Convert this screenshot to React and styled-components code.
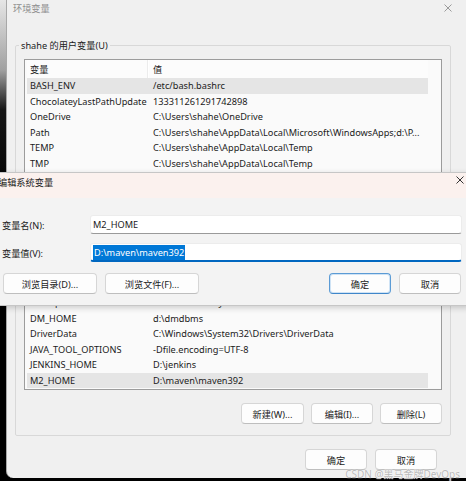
import React from 'react';
import styled, { createGlobalStyle } from 'styled-components';

const GlobalStyle = createGlobalStyle`
  html, body { margin: 0; padding: 0; }
  body {
    width: 466px;
    height: 481px;
    overflow: hidden;
    background: linear-gradient(to bottom, #e6e6e6 0px, #a0a0a0 70px, #151515 110px, #000 200px);
    font-family: "Noto Sans", "Noto Sans CJK SC", sans-serif;
    font-size: 9.2px;
    color: #1b1b1b;
  }
`;

const Window = styled.div`
  position: relative;
  margin-left: 6px;
  width: 460px;
  height: 478px;
  box-sizing: border-box;
  background: #f0f0f0;
  border-left: 1px solid #a8a8a8;
  border-bottom-left-radius: 7px;
  display: flex;
  flex-direction: column;
`;

const TitleBar = styled.div`
  height: 16px;
  flex: none;
  display: flex;
  align-items: center;
  justify-content: space-between;
  padding: 0 14px 0 6px;
  color: #8e8e8e;
`;

const EditTitleBar = styled.div`
  height: 25px;
  flex: none;
  box-sizing: border-box;
  display: flex;
  align-items: flex-start;
  justify-content: space-between;
  padding: 3px 5px 0 1px;
  line-height: 13px;
  background: #fbf1ee;
  color: #1b1b1b;
`;

const Group = styled.fieldset`
  margin: ${p => p.$top}px 15px 0 8px;
  padding: 7px 8px 11px;
  border: 1px solid #d8d8d8;
  border-radius: 2px;
  min-width: 0;
  min-height: 0;
  display: flex;
  flex-direction: column;
  flex: ${p => (p.$grow ? 1 : 'none')};
`;

const Legend = styled.legend`
  padding: 0 2px;
  margin-left: -5px;
  line-height: 13px;
`;

const List = styled.div`
  border: 1px solid #9c9c9c;
  background: #fafafa;
  padding: 0 13px 1px 2px;
  height: ${p => (p.$h ? `${p.$h}px` : 'auto')};
  flex: ${p => (p.$grow ? 1 : 'none')};
  min-height: 0;
  display: flex;
  flex-direction: column;
  justify-content: ${p => (p.$bottom ? 'flex-end' : 'flex-start')};
  overflow: hidden;
`;

const HeaderRow = styled.div`
  flex: none;
  height: 18px;
  display: grid;
  grid-template-columns: 122px 1fr;
  align-items: stretch;
  background: #fcfcfc;
`;

const HeaderCell = styled.div`
  display: flex;
  align-items: center;
  padding-left: ${p => (p.$first ? 3 : 4)}px;
  border-right: ${p => (p.$first ? '1px solid #ffffff' : 'none')};
  box-shadow: ${p => (p.$first ? 'inset -1px 0 0 #ececec' : 'none')};
`;

const Row = styled.div`
  flex: none;
  height: 15.5px;
  display: grid;
  grid-template-columns: 122px 1fr;
  align-items: center;
  background: ${p => (p.$selected ? '#e5e5e5' : 'transparent')};
  white-space: nowrap;
`;

const Cell = styled.span`
  padding-left: ${p => (p.$first ? 3 : 4)}px;
  overflow: hidden;
`;

const ButtonRow = styled.div`
  display: flex;
  flex: none;
  gap: 7px;
  justify-content: flex-end;
  margin-top: 13px;
`;

const BottomBar = styled.div`
  flex: none;
  display: flex;
  justify-content: flex-end;
  gap: 8px;
  margin: 13px 29px 8px 0;
`;

const Button = styled.button`
  width: ${p => p.$w}px;
  height: 21px;
  box-sizing: border-box;
  padding: 0;
  display: flex;
  align-items: center;
  justify-content: center;
  font: inherit;
  color: #1b1b1b;
  background: #fdfdfd;
  border: 1px solid ${p => (p.$primary ? '#5b9bd5' : '#d6d6d6')};
  border-bottom-color: ${p => (p.$primary ? '#3f86c9' : '#bebebe')};
  box-shadow: ${p => (p.$primary ? 'inset 0 0 0 1px #cfe3f5' : 'none')};
  border-radius: 4px;
`;

const EditWindow = styled.div`
  position: absolute;
  top: 172px;
  left: -11px;
  width: 474px;
  height: 134px;
  box-sizing: border-box;
  background: #f3f3f3;
  border: 1px solid #c6c6c6;
  box-shadow: 0 2px 6px rgba(0, 0, 0, 0.18);
  display: flex;
  flex-direction: column;
`;

const Form = styled.div`
  display: grid;
  grid-template-columns: 88px 1fr;
  grid-auto-rows: 19px;
  row-gap: 9px;
  align-items: center;
  padding: 17px 7px 0 5px;
`;

const Field = styled.div`
  height: 19px;
  box-sizing: border-box;
  display: flex;
  align-items: center;
  padding-left: 2px;
  background: #ffffff;
  border: 1px solid #ececec;
  border-bottom: ${p => (p.$focused ? '2px solid #0067c0' : '1px solid #9a9a9a')};
  border-radius: 3px;
  white-space: nowrap;
`;

const Selected = styled.span`
  background: #0078d7;
  color: #ffffff;
  padding: 1px 1px;
`;

const EditButtons = styled.div`
  display: flex;
  gap: 8px;
  margin-top: 11px;
  padding: 0 8px 0 6px;
`;

const Spacer = styled.div`
  flex: 1;
`;

const Watermark = styled.div`
  position: absolute;
  right: 6px;
  bottom: -3px;
  font-size: 10px;
  color: #b9b9b9;
  text-shadow: 0 0 1px #ffffff, 0 0 1px #ffffff;
  white-space: nowrap;
`;

function CloseIcon({ color }) {
  return (
    <svg width="8" height="8" viewBox="0 0 8 8" style={{ display: 'block' }}>
      <path d="M0.5 0.5 L7.5 7.5 M7.5 0.5 L0.5 7.5" stroke={color} strokeWidth="1" fill="none" />
    </svg>
  );
}

const userVars = [
  ['BASH_ENV', '/etc/bash.bashrc'],
  ['ChocolateyLastPathUpdate', '133311261291742898'],
  ['OneDrive', 'C:\\Users\\shahe\\OneDrive'],
  ['Path', 'C:\\Users\\shahe\\AppData\\Local\\Microsoft\\WindowsApps;d:\\P...'],
  ['TEMP', 'C:\\Users\\shahe\\AppData\\Local\\Temp'],
  ['TMP', 'C:\\Users\\shahe\\AppData\\Local\\Temp'],
];

const systemVars = [
  ['ComSpec', 'C:\\WINDOWS\\system32\\cmd.exe'],
  ['DM_HOME', 'd:\\dmdbms'],
  ['DriverData', 'C:\\Windows\\System32\\Drivers\\DriverData'],
  ['JAVA_TOOL_OPTIONS', '-Dfile.encoding=UTF-8'],
  ['JENKINS_HOME', 'D:\\jenkins'],
  ['M2_HOME', 'D:\\maven\\maven392'],
];

export default function App() {
  return (
    <>
      <GlobalStyle />
      <Window>
        <TitleBar>
          <span>环境变量</span>
          <CloseIcon color="#9a9a9a" />
        </TitleBar>

        <Group $top={23}>
          <Legend>shahe 的用户变量(U)</Legend>
          <List $h={150}>
            <HeaderRow>
              <HeaderCell $first>变量</HeaderCell>
              <HeaderCell>值</HeaderCell>
            </HeaderRow>
            {userVars.map(([name, value], i) => (
              <Row key={name} $selected={i === 0}>
                <Cell $first>{name}</Cell>
                <Cell>{value}</Cell>
              </Row>
            ))}
          </List>
          <ButtonRow>
            <Button $w={63}>新建(N)...</Button>
            <Button $w={62}>编辑(E)...</Button>
            <Button $w={62}>删除(D)</Button>
          </ButtonRow>
        </Group>

        <Group $top={6} $grow>
          <Legend>系统变量(S)</Legend>
          <List $grow $bottom>
            {systemVars.map(([name, value]) => (
              <Row key={name} $selected={name === 'M2_HOME'}>
                <Cell $first>{name}</Cell>
                <Cell>{value}</Cell>
              </Row>
            ))}
          </List>
          <ButtonRow>
            <Button $w={63}>新建(W)...</Button>
            <Button $w={62}>编辑(I)...</Button>
            <Button $w={62}>删除(L)</Button>
          </ButtonRow>
        </Group>

        <BottomBar>
          <Button $w={62}>确定</Button>
          <Button $w={62}>取消</Button>
        </BottomBar>

        <EditWindow>
          <EditTitleBar>
            <span>编辑系统变量</span>
            <CloseIcon color="#333333" />
          </EditTitleBar>
          <Form>
            <span>变量名(N):</span>
            <Field>M2_HOME</Field>
            <span>变量值(V):</span>
            <Field $focused>
              <Selected>D:\maven\maven392</Selected>
            </Field>
          </Form>
          <EditButtons>
            <Button $w={94}>浏览目录(D)...</Button>
            <Button $w={94}>浏览文件(F)...</Button>
            <Spacer />
            <Button $w={62} $primary>确定</Button>
            <Button $w={62}>取消</Button>
          </EditButtons>
        </EditWindow>

        <Watermark>CSDN @黑马金牌DevOps</Watermark>
      </Window>
    </>
  );
}
